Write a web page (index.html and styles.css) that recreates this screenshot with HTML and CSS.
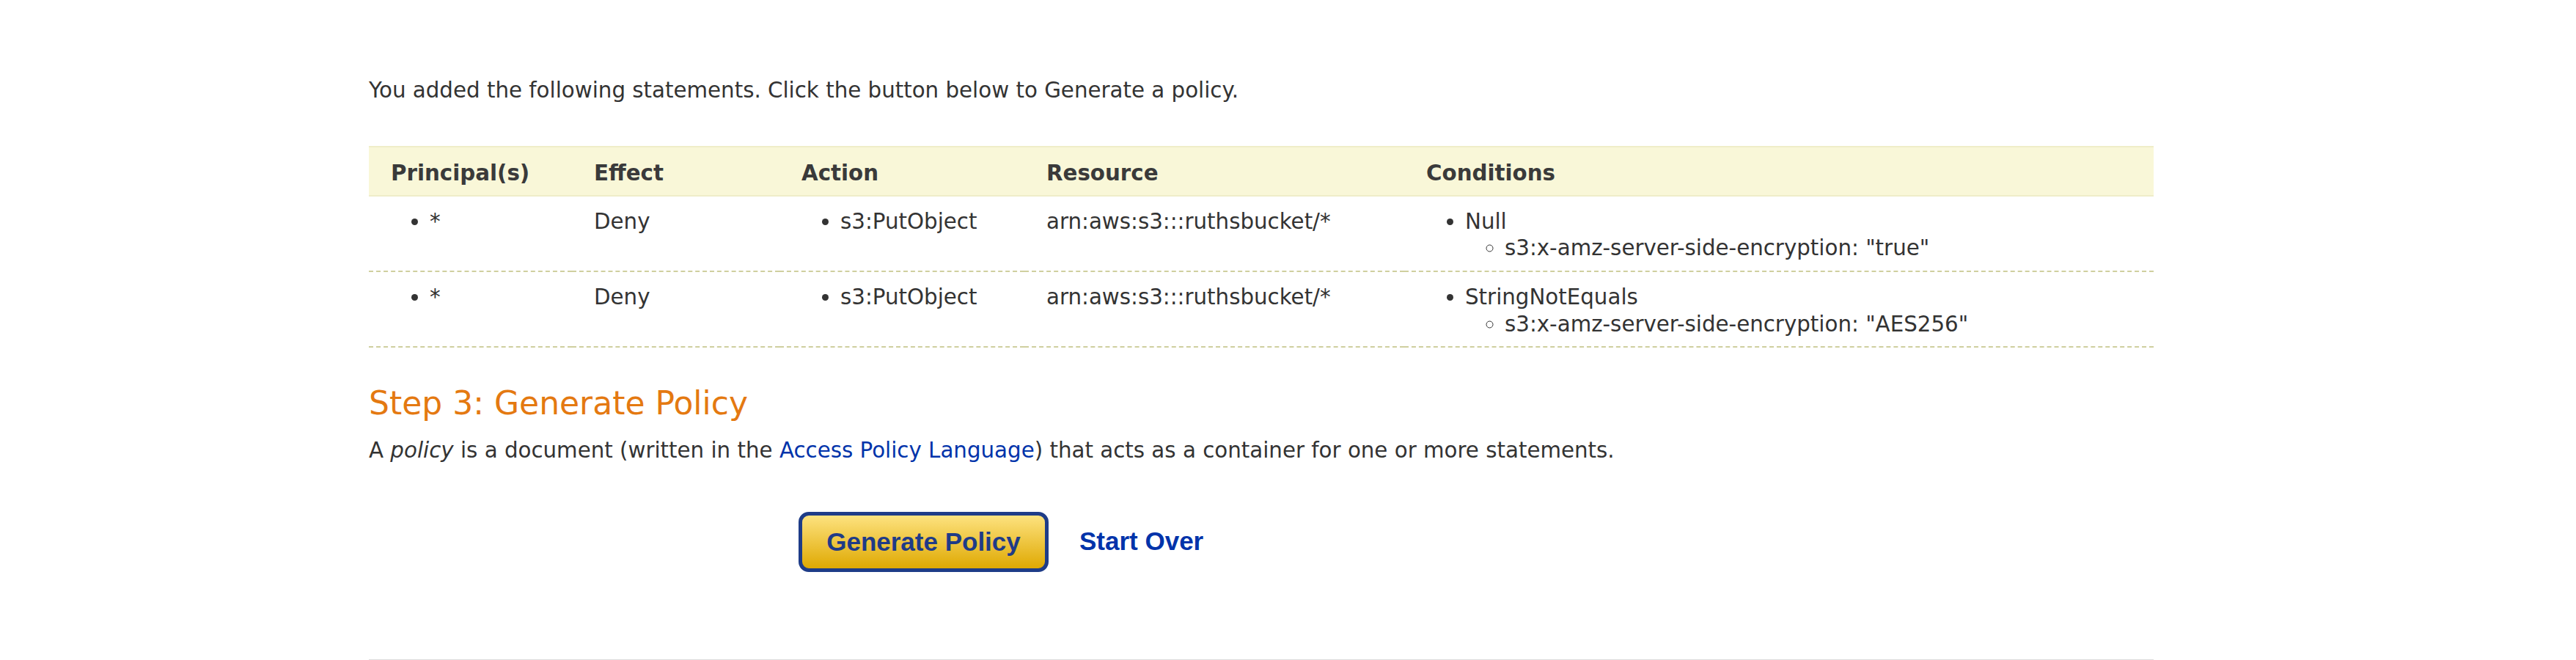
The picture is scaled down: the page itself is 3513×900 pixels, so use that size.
FILE: index.html
```html
<!DOCTYPE html>
<html>
<head>
<meta charset="utf-8">
<link rel="stylesheet" href="styles.css">
</head>
<body>
<div class="page">
  <p class="intro">You added the following statements. Click the button below to Generate a policy.</p>
  <table class="stmts">
    <colgroup>
      <col class="c1"><col class="c2"><col class="c3"><col class="c4"><col class="c5">
    </colgroup>
    <thead>
      <tr><th>Principal(s)</th><th>Effect</th><th>Action</th><th>Resource</th><th>Conditions</th></tr>
    </thead>
    <tbody>
      <tr>
        <td><ul class="list"><li>*</li></ul></td>
        <td>Deny</td>
        <td><ul class="list"><li>s3:PutObject</li></ul></td>
        <td>arn:aws:s3:::ruthsbucket/*</td>
        <td><ul class="list"><li>Null<ul class="sub"><li>s3:x-amz-server-side-encryption: "true"</li></ul></li></ul></td>
      </tr>
      <tr>
        <td><ul class="list"><li>*</li></ul></td>
        <td>Deny</td>
        <td><ul class="list"><li>s3:PutObject</li></ul></td>
        <td>arn:aws:s3:::ruthsbucket/*</td>
        <td><ul class="list"><li>StringNotEquals<ul class="sub"><li>s3:x-amz-server-side-encryption: "AES256"</li></ul></li></ul></td>
      </tr>
    </tbody>
  </table>
  <h2 class="step">Step 3: Generate Policy</h2>
  <p class="desc">A <em>policy</em> is a document (written in the <a class="link" href="#">Access Policy Language</a>) that acts as a container for one or more statements.</p>
  <div class="actions">
    <button class="gen">Generate Policy</button>
    <a class="over" href="#">Start Over</a>
  </div>
  <div class="rule"></div>
</div>
</body>
</html>
```
FILE: styles.css
```css
html, body {
  margin: 0;
  padding: 0;
  background: #ffffff;
}
body {
  font-family: "DejaVu Sans", Verdana, sans-serif;
  font-size: 29.3px;
  line-height: 36.6px;
  color: #333333;
}
.page {
  margin-left: 503px;
  width: 2434px;
  padding-top: 104.6px;
}
.intro {
  margin: 0 0 58px 0;
}
.stmts {
  width: 2434px;
  border-collapse: collapse;
  table-layout: fixed;
}
.c1 { width: 277px; }
.c2 { width: 283px; }
.c3 { width: 334px; }
.c4 { width: 518px; }
.c5 { width: 1022px; }
.stmts th {
  background: #f9f7d8;
  border-top: 2px solid #efedc9;
  border-bottom: 2px solid #efedc9;
  text-align: left;
  font-weight: bold;
  padding: 17px 0 11px 30px;
  color: #3a3a3a;
}
.stmts td {
  vertical-align: top;
  padding: 16px 0 12px 30px;
  border-bottom: 2px dashed #cfcf9f;
}
.list {
  margin: 0;
  padding-left: 53px;
  list-style: disc;
}
.sub {
  margin: 0;
  padding-left: 54px;
  list-style: circle;
}
.step {
  margin: 49.4px 0 0 0;
  font-size: 44px;
  line-height: 52px;
  font-weight: normal;
  color: #e47911;
}
.desc {
  margin: 20.8px 0 0 0;
}
.link {
  color: #0033aa;
  text-decoration: none;
}
.actions {
  display: flex;
  align-items: center;
  margin: 64.8px 0 0 586px;
  gap: 42px;
}
.gen {
  width: 341px;
  height: 82px;
  border: 5px solid #1e3c88;
  border-radius: 14px;
  background: linear-gradient(#fde27f, #dfa902);
  color: #1f3b87;
  font-family: "Liberation Sans", Arial, sans-serif;
  font-weight: bold;
  font-size: 35px;
  padding: 0;
  margin: 0;
}
.over {
  font-family: "Liberation Sans", Arial, sans-serif;
  font-weight: bold;
  font-size: 35px;
  color: #0033aa;
  text-decoration: none;
}
.rule {
  margin-top: 119px;
  height: 2px;
  background: #dddddd;
}
```
